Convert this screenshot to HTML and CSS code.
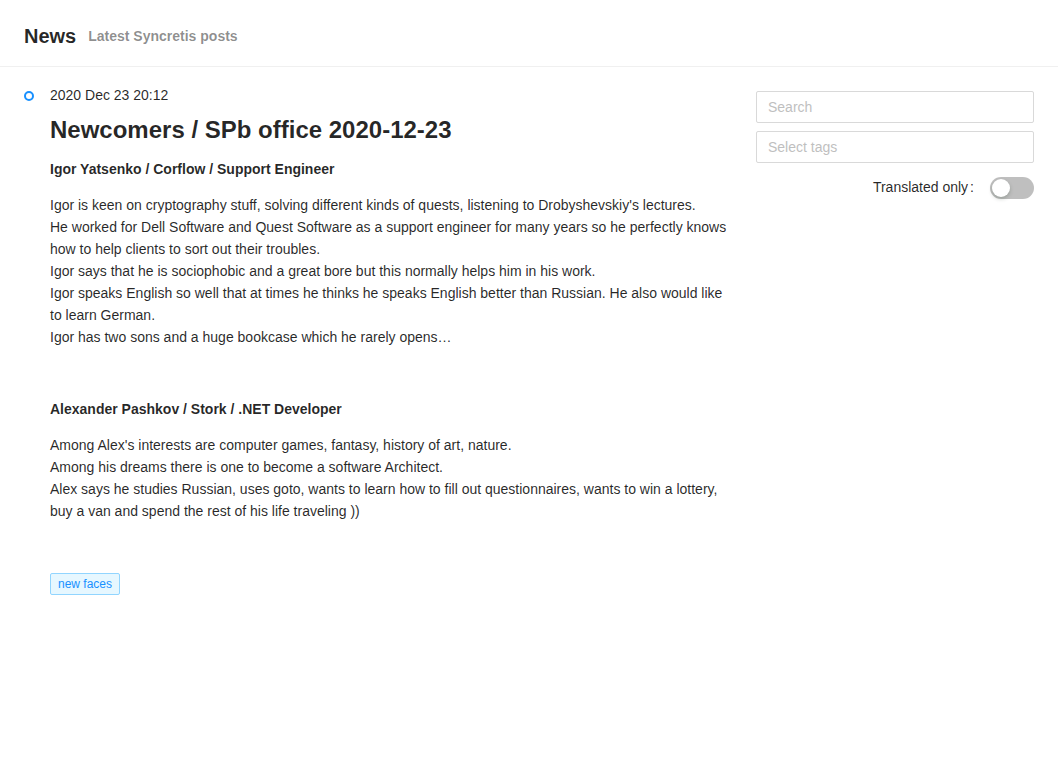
FILE: index.html
```html
<!DOCTYPE html>
<html lang="en">
<head>
<meta charset="utf-8">
<title>News</title>
<link rel="stylesheet" href="styles.css">
</head>
<body>
<header class="page-header">
  <span class="page-title">News</span>
  <span class="page-subtitle">Latest Syncretis posts</span>
</header>
<main class="main">
  <section class="timeline">
    <div class="timeline-item">
      <div class="timeline-dot-col"><span class="timeline-dot"></span></div>
      <article class="timeline-content">
        <div class="post-date">2020 Dec 23 20:12</div>
        <h1 class="post-title">Newcomers / SPb office 2020-12-23</h1>
        <p class="author">Igor Yatsenko / Corflow / Support Engineer</p>
        <p>Igor is keen on cryptography stuff, solving different kinds of quests, listening to Drobyshevskiy's lectures.<br>He worked for Dell Software and Quest Software as a support engineer for many years so he perfectly knows how to help clients to sort out their troubles.<br>Igor says that he is sociophobic and a great bore but this normally helps him in his work.<br>Igor speaks English so well that at times he thinks he speaks English better than Russian. He also would like to learn German.<br>Igor has two sons and a huge bookcase which he rarely opens…</p>
        <p>&nbsp;</p>
        <p class="author">Alexander Pashkov / Stork / .NET Developer</p>
        <p>Among Alex's interests are computer games, fantasy, history of art, nature.<br>Among his dreams there is one to become a software Architect.<br>Alex says he studies Russian, uses goto, wants to learn how to fill out questionnaires, wants to win a lottery, buy a van and spend the rest of his life traveling ))</p>
        <p>&nbsp;</p>
        <div class="tags"><span class="tag">new faces</span></div>
      </article>
    </div>
  </section>
  <aside class="sidebar">
    <input class="input" type="text" placeholder="Search">
    <div class="input select">Select tags</div>
    <div class="switch-row">
      <span class="switch-label">Translated only<span class="colon">:</span></span>
      <span class="switch"><span class="switch-knob"></span></span>
    </div>
  </aside>
</main>
</body>
</html>
```
FILE: styles.css
```css
* { box-sizing: border-box; }
html, body { margin: 0; padding: 0; background: #fff; }
body {
  font-family: "Liberation Sans", Arial, sans-serif;
  font-size: 14px;
  line-height: 22px;
  color: rgba(0,0,0,0.85);
}
.page-header {
  display: flex;
  align-items: center;
  padding: 20px 24px 14px;
  border-bottom: 1px solid #f0f0f0;
}
.page-title {
  font-size: 20px;
  font-weight: 700;
  line-height: 32px;
  margin-right: 12px;
}
.page-subtitle {
  font-size: 14px;
  font-weight: 700;
  color: rgba(0,0,0,0.45);
  line-height: 22px;
}
.main {
  display: flex;
  gap: 24px;
  padding: 24px 24px;
}
.timeline { flex: 1; min-width: 0; }
.timeline-item { display: flex; }
.timeline-dot-col { width: 26px; flex: none; }
.timeline-dot {
  display: block;
  width: 10px;
  height: 10px;
  border: 2px solid #1890ff;
  border-radius: 50%;
  background: #fff;
}
.timeline-content { flex: 1; min-width: 0; margin-top: -7px; }
.post-date { line-height: 22px; }
.post-title {
  font-size: 24px;
  font-weight: 700;
  line-height: 32px;
  margin: 8px 0 12px;
}
p { margin: 0 0 14px; }
.author { font-weight: 700; }
.tags { display: flex; padding-top: 1px; }
.tag {
  display: inline-block;
  font-size: 12px;
  line-height: 20px;
  padding: 0 7px;
  color: #1890ff;
  background: #e6f7ff;
  border: 1px solid #91d5ff;
  border-radius: 2px;
}
.sidebar {
  width: 278px;
  flex: none;
  display: flex;
  flex-direction: column;
  gap: 8px;
}
.input {
  display: block;
  width: 100%;
  height: 32px;
  padding: 4px 11px;
  border: 1px solid #d9d9d9;
  border-radius: 2px;
  font-family: inherit;
  font-size: 14px;
  line-height: 22px;
  color: rgba(0,0,0,0.85);
  background: #fff;
  outline: none;
}
.input::placeholder { color: #bfbfbf; }
.select { color: #bfbfbf; }
.switch-row {
  display: flex;
  justify-content: flex-end;
  align-items: center;
  height: 32px;
}
.switch-label { margin-right: 16px; }
.colon { margin-left: 2px; }
.switch {
  position: relative;
  display: inline-block;
  width: 44px;
  height: 22px;
  margin-top: 2px;
  border-radius: 100px;
  background: rgba(0,0,0,0.25);
}
.switch-knob {
  position: absolute;
  top: 2px;
  left: 2px;
  width: 18px;
  height: 18px;
  border-radius: 50%;
  background: #fff;
  box-shadow: 0 2px 4px rgba(0,35,11,0.2);
}
```
